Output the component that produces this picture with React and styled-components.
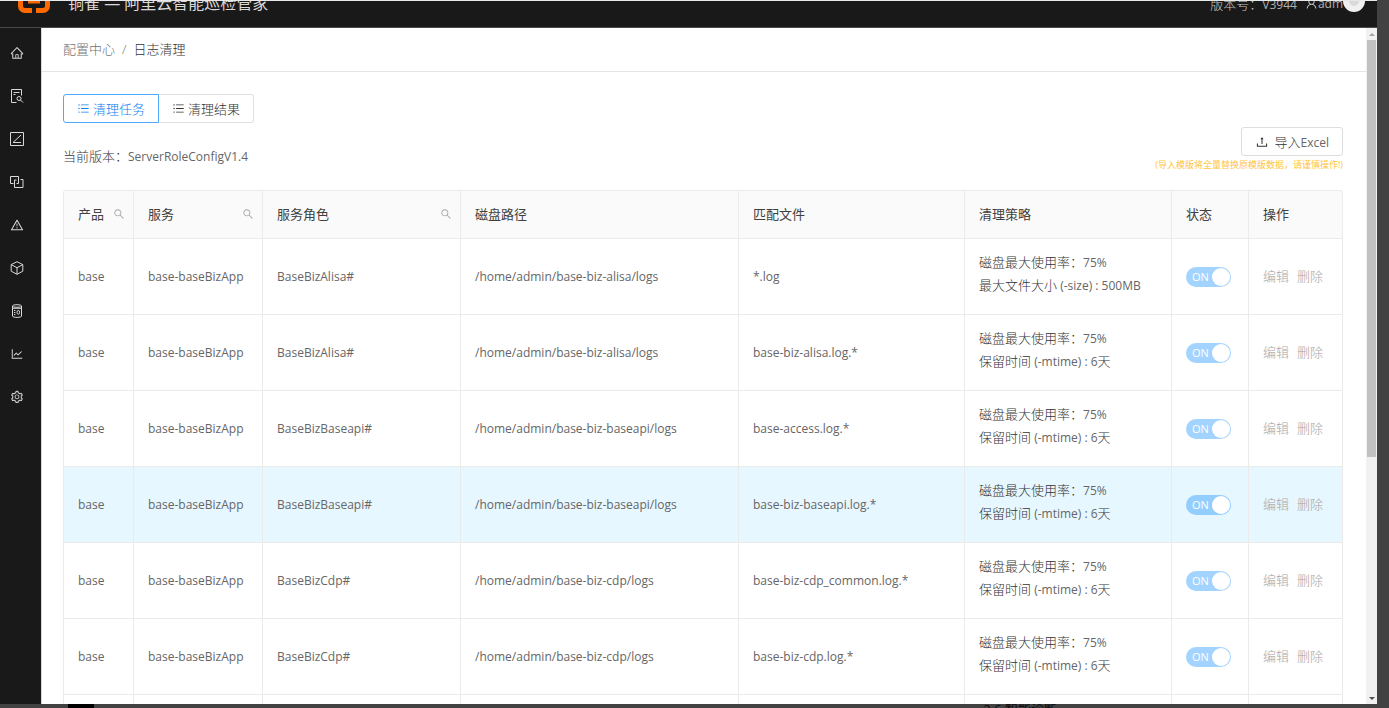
import { useState } from "react";
import styled, { createGlobalStyle, css } from "styled-components";
import {
  AiOutlineHome,
  AiOutlineLineChart,
  AiOutlineSearch,
  AiOutlineSetting,
  AiOutlineUnorderedList,
  AiOutlineUpload,
  AiOutlineUser,
  AiOutlineWarning,
} from "react-icons/ai";

const columns = [
  { title: "产品", width: 70, search: true },
  { title: "服务", width: 129, search: true },
  { title: "服务角色", width: 198, search: true },
  { title: "磁盘路径", width: 278 },
  { title: "匹配文件", width: 226 },
  { title: "清理策略", width: 207 },
  { title: "状态", width: 77 },
  { title: "操作", width: 94 },
];

const size = { name: "最大文件大小", value: " (-size) : 500MB" };
const mtime = { name: "保留时间", value: " (-mtime) : 6", unit: "天" };

const rows = [
  { id: 1, role: "BaseBizAlisa#", path: "/home/admin/base-biz-alisa/logs", file: "*.log", rule: size },
  { id: 2, role: "BaseBizAlisa#", path: "/home/admin/base-biz-alisa/logs", file: "base-biz-alisa.log.*", rule: mtime },
  { id: 3, role: "BaseBizBaseapi#", path: "/home/admin/base-biz-baseapi/logs", file: "base-access.log.*", rule: mtime },
  { id: 4, role: "BaseBizBaseapi#", path: "/home/admin/base-biz-baseapi/logs", file: "base-biz-baseapi.log.*", rule: mtime, active: true },
  { id: 5, role: "BaseBizCdp#", path: "/home/admin/base-biz-cdp/logs", file: "base-biz-cdp_common.log.*", rule: mtime },
  { id: 6, role: "BaseBizCdp#", path: "/home/admin/base-biz-cdp/logs", file: "base-biz-cdp.log.*", rule: mtime },
];

const tabs = [
  { key: "task", label: "清理任务" },
  { key: "result", label: "清理结果" },
];

const FileSearchIcon = () => (
  <svg width="14" height="14" viewBox="0 0 14 14" fill="none" stroke="currentColor">
    <path d="M6.5 13.5h-5V.5h10v6M3.5 3.5h6M3.5 5.5h2" />
    <circle cx="9" cy="9.5" r="2" />
    <path d="M10.5 11l2.5 2.5" />
  </svg>
);

const SlashSquareIcon = () => (
  <svg width="14" height="14" viewBox="0 0 14 14" fill="none" stroke="currentColor">
    <path d="M.5.5h13v13H.5zM3 10.5L11 3M3 10.5h8" />
  </svg>
);

const OverlapIcon = () => (
  <svg width="14" height="14" viewBox="0 0 14 14" fill="none" stroke="currentColor">
    <path d="M3.5 8.5h-3v-7h8v7H6.5" />
    <path d="M10.5 4.5h2.5v8H4.5V5h2" />
  </svg>
);

const CubeIcon = () => (
  <svg width="14" height="14" viewBox="0 0 14 14" fill="none" stroke="currentColor" strokeLinejoin="round">
    <path d="M7 .7l5.8 2.9v6.6L7 13.3 1.2 10.2V3.6zM1.2 3.6L7 6.7l5.8-3.1M7 6.7v6.6" />
  </svg>
);

const DatabaseIcon = () => (
  <svg width="14" height="14" viewBox="0 0 14 14" fill="none" stroke="currentColor">
    <path d="M2.5 2v10c0 .8 2 1.4 4.6 1.4s4.4-.6 4.4-1.4V2" />
    <ellipse cx="7" cy="2" rx="4.5" ry="1.3" />
    <path d="M2.5 4.3h9M4 6.5h1.4M4 8.5h1.4M4 10.5h1.4" />
    <ellipse cx="8.3" cy="8.3" rx="1.3" ry="1.9" />
  </svg>
);

const Logo = () => (
  <svg width="32" height="34" viewBox="0 0 32 34" fill="none" stroke="#ff6a00" strokeWidth="5">
    <path d="M14 2.5H7a4.5 4.5 0 0 0-4.5 4.5v16A4.5 4.5 0 0 0 7 27.5h7M18 2.5h7A4.5 4.5 0 0 1 29.5 7v16a4.5 4.5 0 0 1-4.5 4.5h-7" />
    <path d="M10 19h12" strokeWidth="3" />
  </svg>
);

const menus = [
  { label: "首页", icon: AiOutlineHome },
  { label: "巡检报告", icon: FileSearchIcon },
  { label: "变更", icon: SlashSquareIcon },
  { label: "组件", icon: OverlapIcon },
  { label: "告警", icon: AiOutlineWarning },
  { label: "产品", icon: CubeIcon },
  { label: "数据", icon: DatabaseIcon },
  { label: "报表", icon: AiOutlineLineChart },
  { label: "配置中心", icon: AiOutlineSetting },
];

export default function App() {
  const [tab, setTab] = useState("task");

  return (
    <Desktop>
      <GlobalStyle />
      <Window>
        <Header>
          <Brand>
            <Logo />
            <h1>铜雀 — 阿里云智能巡检管家</h1>
          </Brand>
          <Account>
            <span>
              版本号：<Latin>V3944</Latin>
            </span>
            <User>
              <AiOutlineUser />
              <Latin>adm</Latin>
              <Avatar />
            </User>
          </Account>
        </Header>
        <Body>
          <Sidebar>
            {menus.map(({ label, icon: Icon }) => (
              <MenuButton key={label} aria-label={label}>
                <Icon />
              </MenuButton>
            ))}
          </Sidebar>
          <Main>
            <Breadcrumb>
              <a href="#config">配置中心</a>
              <i>/</i>
              <span>日志清理</span>
            </Breadcrumb>
            <Content>
              <Tabs>
                {tabs.map((item) => (
                  <Tab key={item.key} $active={tab === item.key}>
                    <input
                      type="radio"
                      name="tab"
                      checked={tab === item.key}
                      onChange={() => setTab(item.key)}
                    />
                    <AiOutlineUnorderedList />
                    {item.label}
                  </Tab>
                ))}
              </Tabs>
              <Toolbar>
                <Version>
                  当前版本：<Latin>ServerRoleConfigV1.4</Latin>
                </Version>
                <Import>
                  <ImportButton>
                    <AiOutlineUpload />
                    <span>
                      导入<Latin>Excel</Latin>
                    </span>
                  </ImportButton>
                  <Tip>(导入模版将全量替换原模版数据，请谨慎操作!)</Tip>
                </Import>
              </Toolbar>
              <Table>
                <colgroup>
                  {columns.map((col) => (
                    <Col key={col.title} $width={col.width} />
                  ))}
                </colgroup>
                <thead>
                  <tr>
                    {columns.map((col) => (
                      <Th key={col.title}>
                        <HeadCell>
                          {col.title}
                          {col.search && (
                            <SearchButton aria-label={`搜索${col.title}`}>
                              <AiOutlineSearch />
                            </SearchButton>
                          )}
                        </HeadCell>
                      </Th>
                    ))}
                  </tr>
                </thead>
                <tbody>
                  {rows.map((row) => (
                    <Row key={row.id} $active={row.active}>
                      <Td>
                        <Latin>base</Latin>
                      </Td>
                      <Td>
                        <Latin>base-baseBizApp</Latin>
                      </Td>
                      <Td>
                        <Latin>{row.role}</Latin>
                      </Td>
                      <Td>
                        <Latin>{row.path}</Latin>
                      </Td>
                      <Td>
                        <Latin>{row.file}</Latin>
                      </Td>
                      <RuleTd>
                        磁盘最大使用率：<Latin>75%</Latin>
                        <br />
                        {row.rule.name}
                        <Latin>{row.rule.value}</Latin>
                        {row.rule.unit}
                      </RuleTd>
                      <Td>
                        <Switch>
                          <input type="checkbox" aria-label="状态" defaultChecked disabled />
                          <span>ON</span>
                        </Switch>
                      </Td>
                      <Td>
                        <Actions>
                          <ActionButton disabled>编辑</ActionButton>
                          <ActionButton disabled>删除</ActionButton>
                        </Actions>
                      </Td>
                    </Row>
                  ))}
                  <Row>
                    {columns.map((col) => (
                      <Td key={col.title} />
                    ))}
                  </Row>
                </tbody>
              </Table>
            </Content>
          </Main>
          <Scrollbar>
            <Arrow $up />
            <Track>
              <Thumb />
            </Track>
            <Arrow />
          </Scrollbar>
        </Body>
      </Window>
      <Backdrop>
        <Patch />
        <span>2.6 智能诊断</span>
      </Backdrop>
    </Desktop>
  );
}

const GlobalStyle = createGlobalStyle`
  * {
    box-sizing: border-box;
  }

  body {
    margin: 0;
    overflow: hidden;
    font-family: "Open Sans", "Noto Sans CJK SC", sans-serif;
    font-size: 13px;
    font-weight: 300;
    color: #333;
  }

  button {
    font: inherit;
    color: inherit;
    background: none;
    border: none;
    padding: 0;
  }

  input {
    margin: 0;
  }
`;

const Desktop = styled.div`
  display: flex;
  flex-direction: column;
  height: 100vh;
  background: #424242;
`;

const Window = styled.div`
  flex: 1;
  min-height: 0;
  margin-right: 12px;
  display: flex;
  flex-direction: column;
  border-top: 1px solid #e8e8e8;
`;

const Latin = styled.span`
  font-size: 12px;
  font-weight: 400;
  color: #666;
`;

/* the bar is scrolled partly out of view, so its content hangs from the bottom */
const Header = styled.header`
  flex: none;
  height: 27px;
  padding: 0 12px 0 18px;
  display: flex;
  justify-content: space-between;
  align-items: flex-end;
  overflow: hidden;
  background: #191919;
  border-bottom: 1px solid #4a4a4a;
  color: #d9d9d9;
`;

const Brand = styled.div`
  height: 48px;
  display: flex;
  align-items: center;
  gap: 18px;

  svg {
    margin-bottom: 6px;
  }

  h1 {
    margin: 0;
    font-size: 16px;
    font-weight: 400;
    line-height: 48px;
  }
`;

const Account = styled.div`
  height: 48px;
  display: flex;
  align-items: center;
  gap: 8px;
  color: #c8c8c8;

  ${Latin} {
    color: #b0b0b0;
  }
`;

const User = styled.div`
  display: flex;
  align-items: center;

  svg {
    font-size: 13px;
  }
`;

const Avatar = styled.span`
  width: 22px;
  height: 22px;
  margin-bottom: 4px;
  border-radius: 50%;
  border: 6px solid #f0f0f0;
  background: #d9d9d9;
`;

const Body = styled.div`
  flex: 1;
  min-height: 0;
  display: flex;
  background: #fff;
`;

const Sidebar = styled.nav`
  flex: none;
  width: 41px;
  padding: 3px 8px 0 0;
  display: flex;
  flex-direction: column;
  background: #191919;
`;

const MenuButton = styled.button`
  height: 43px;
  display: flex;
  align-items: center;
  justify-content: center;
  color: #d9d9d9;
  font-size: 14px;
`;

const Main = styled.main`
  flex: 1;
  min-width: 0;
  overflow: hidden;
  border-left: 1px solid #d9d9d9;
`;

const Breadcrumb = styled.nav`
  height: 44px;
  padding: 0 21px 2px;
  display: flex;
  align-items: center;
  gap: 7px;
  border-bottom: 1px solid #e4e4e4;
  color: #737373;

  a {
    color: inherit;
    text-decoration: none;
  }

  i {
    font-style: normal;
  }

  span {
    color: #333;
  }
`;

const Content = styled.section`
  padding: 22px 23px 0 21px;
`;

const Tabs = styled.div`
  display: flex;
`;

const Tab = styled.label`
  height: 29px;
  padding: 0 13px;
  display: flex;
  align-items: center;
  gap: 3px;
  border: 1px solid #e0e0e0;
  border-left: none;
  border-radius: 0 3px 3px 0;

  input {
    appearance: none;
    width: 0;
    height: 0;
    margin-right: -3px;
  }

  ${({ $active }) =>
    $active &&
    css`
      border: 1px solid #4ba9ff;
      border-radius: 3px 0 0 3px;
      color: #1080f0;
    `}
`;

const Toolbar = styled.div`
  margin: 4px 0 16px;
  display: flex;
  justify-content: space-between;
  align-items: flex-end;
`;

const Version = styled.span`
  line-height: 34px;
`;

const Import = styled.div`
  display: flex;
  flex-direction: column;
  align-items: flex-end;
`;

const ImportButton = styled.button`
  height: 29px;
  padding: 0 13px;
  display: flex;
  align-items: center;
  gap: 6px;
  border: 1px solid #dedede;
  border-radius: 3px;

  svg {
    font-size: 14px;
  }
`;

const Tip = styled.small`
  font-size: 9px;
  font-weight: 400;
  line-height: 18px;
  color: #ffc53d;
`;

const Table = styled.table`
  width: 100%;
  table-layout: fixed;
  border-collapse: separate;
  border-spacing: 0;
  border: 1px solid #ebebeb;
  border-width: 1px 0 0 1px;
  border-radius: 3px 3px 0 0;
`;

const Col = styled.col`
  width: ${({ $width }) => $width}px;
`;

const cell = css`
  padding: 0 14px;
  text-align: left;
  border: 1px solid #ebebeb;
  border-width: 0 1px 1px 0;
`;

const Th = styled.th`
  ${cell}
  height: 48px;
  padding-bottom: 2px;
  background: #fafafa;
  color: #404040;
  font-weight: 400;

  &:last-child {
    border-top-right-radius: 3px;
  }
`;

const HeadCell = styled.div`
  display: flex;
  align-items: center;
  justify-content: space-between;
  margin-right: -6px;
  white-space: nowrap;
`;

const SearchButton = styled.button`
  display: flex;
  color: #a6a6a6;
  font-size: 12px;
`;

const Row = styled.tr`
  background: ${({ $active }) => ($active ? "#e6f7ff" : "#fff")};
`;

const Td = styled.td`
  ${cell}
  height: 76px;
  line-height: 23px;
  white-space: nowrap;
`;

const RuleTd = styled(Td)`
  padding-bottom: 5px;
`;

const Switch = styled.label`
  position: relative;
  display: block;
  width: 45px;
  height: 20px;

  input {
    appearance: none;
    display: block;
    width: 45px;
    height: 20px;
    border-radius: 10px;
    background: rgba(24, 144, 255, 0.4);
  }

  input::after {
    content: "";
    position: absolute;
    top: 1px;
    right: 1px;
    width: 18px;
    height: 18px;
    border-radius: 50%;
    background: #fff;
  }

  span {
    position: absolute;
    top: 0;
    left: 6px;
    line-height: 20px;
    font-size: 11px;
    font-weight: 400;
    color: #fff;
  }
`;

const Actions = styled.div`
  display: flex;
  gap: 8px;
`;

const ActionButton = styled.button`
  color: #a6a6a6;
`;

const Scrollbar = styled.div`
  flex: none;
  width: 11px;
  display: flex;
  flex-direction: column;
  background: #f1f1f1;
`;

const Arrow = styled.span`
  height: 12px;
  display: flex;
  align-items: center;
  justify-content: center;

  &::before {
    content: "";
    border: 3px solid transparent;
    ${({ $up }) =>
      $up
        ? "border-bottom-color: #a3a3a3; border-top: none;"
        : "border-top-color: #505050; border-bottom: none;"}
  }
`;

const Track = styled.div`
  flex: 1;
  padding: 0 1px;
`;

const Thumb = styled.div`
  height: 64%;
  background: #c1c1c1;
`;

const Backdrop = styled.footer`
  flex: none;
  height: 4px;
  padding: 0 332px 0 68px;
  display: flex;
  justify-content: space-between;
  overflow: hidden;
  color: #0a0a0a;
  font-weight: 400;
  line-height: 10px;
`;

const Patch = styled.div`
  width: 26px;
  background: #000;
`;
